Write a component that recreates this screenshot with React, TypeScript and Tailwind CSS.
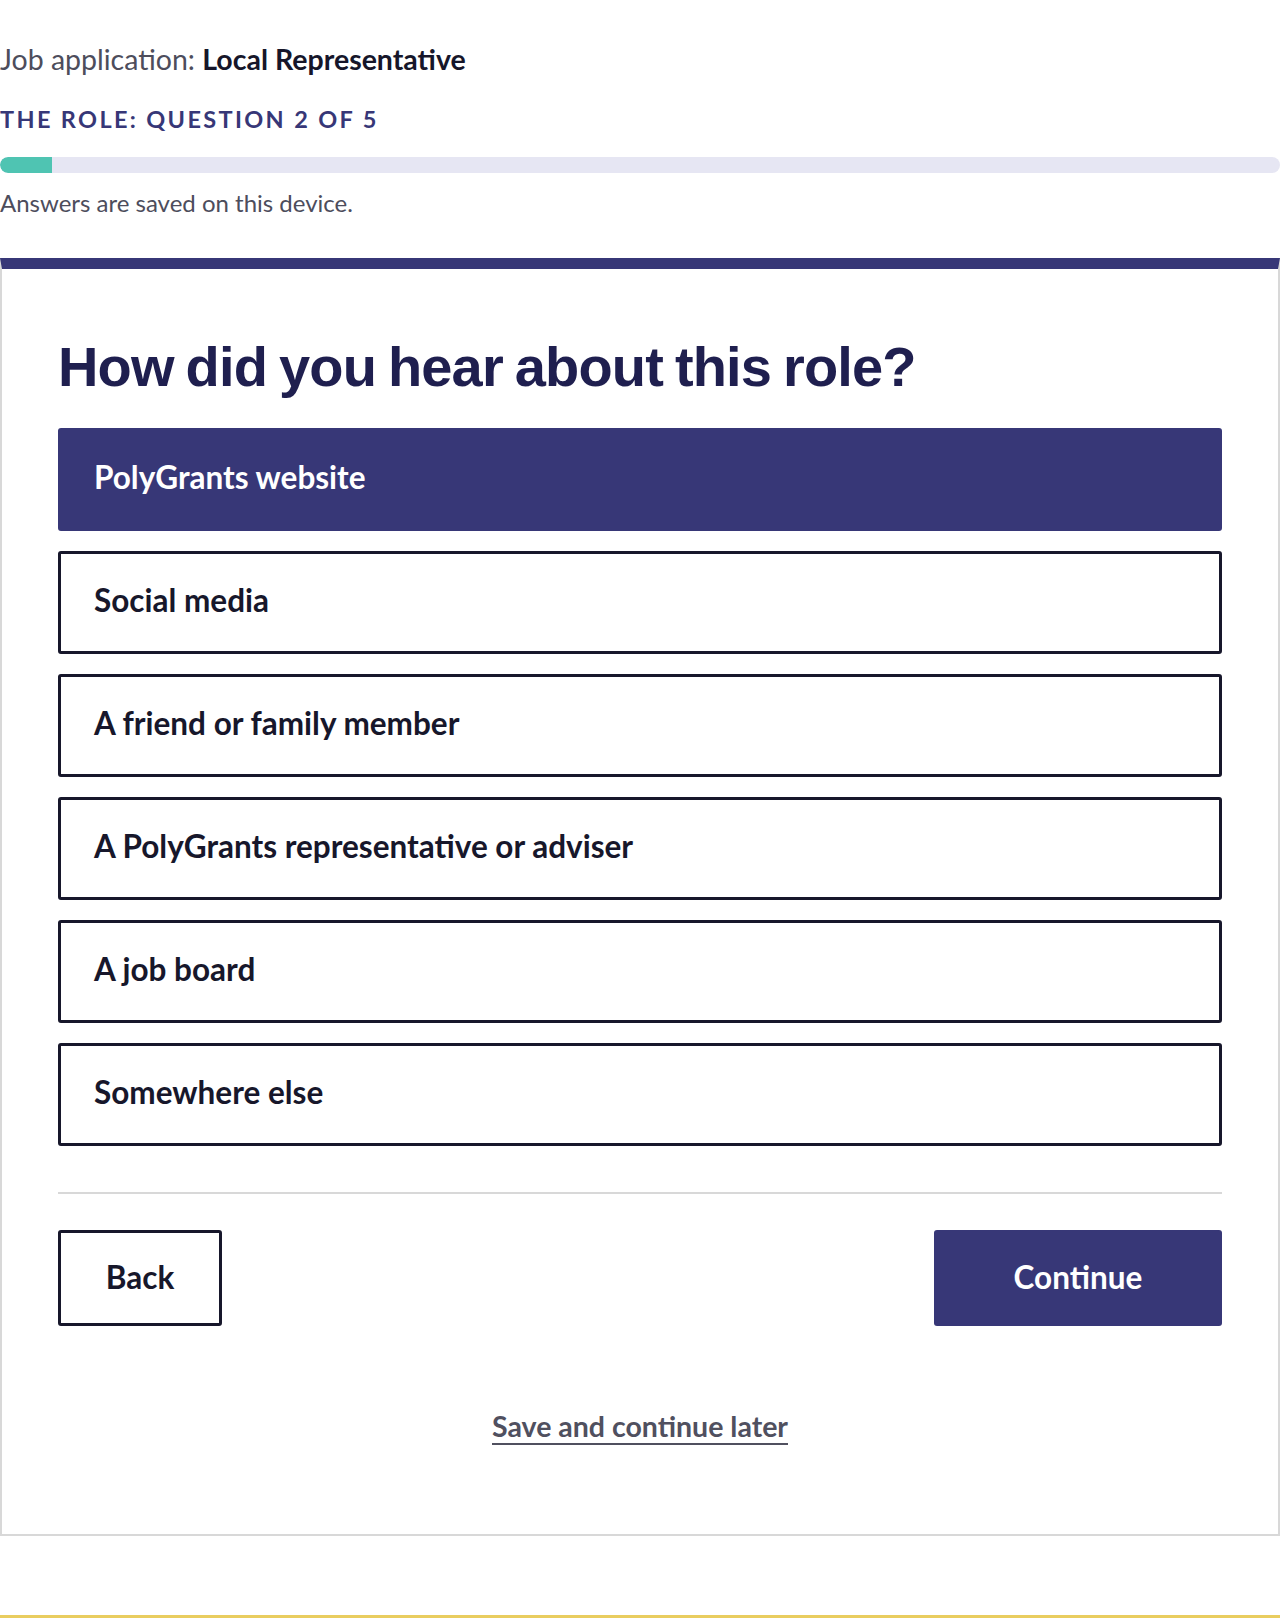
const OPTIONS = [
  "PolyGrants website",
  "Social media",
  "A friend or family member",
  "A PolyGrants representative or adviser",
  "A job board",
  "Somewhere else",
];

function OptionButton({ label, selected }: { label: string; selected: boolean }) {
  return (
    <button
      type="button"
      className={`flex h-[103px] w-full items-center rounded-[3px] border-[3px] pb-[4px] pl-[33px] text-left text-[31.5px] font-bold ${
        selected
          ? "border-[#373777] bg-[#373777] text-white"
          : "border-[#17172b] bg-white text-[#17172b]"
      }`}
    >
      {label}
    </button>
  );
}

export default function App() {
  const selected = 0;

  return (
    <div className="relative min-h-[1618px] bg-white font-['Lato',sans-serif]">
      <div className="pt-[43px]">
        <p className="text-[28.5px] leading-[32px] text-[#4d4d5c]">
          Job application: <span className="font-bold text-[#16162a]">Local Representative</span>
        </p>
        <p className="mt-[30px] text-[23.5px] font-bold leading-[28px] tracking-[0.1em] text-[#373777]">
          THE ROLE: QUESTION 2 OF 5
        </p>
        <div className="mt-[24px] h-[16px] w-full overflow-hidden rounded-full bg-[#e6e6f3]">
          <div className="h-full w-[52px] rounded-l-full bg-[#4fc4b2]" />
        </div>
        <p className="mt-[16px] text-[24px] leading-[28px] text-[#4d4d5c]">
          Answers are saved on this device.
        </p>
      </div>

      <div className="mt-[41px] border-x-2 border-b-2 border-t-[11px] border-[#d8d8d8] border-t-[#373777] px-[56px] pb-[86px]">
        <h1 className="mt-[66px] font-['Liberation_Sans',Arial,sans-serif] text-[56px] font-bold leading-[64px] tracking-[-0.015em] text-[#1f1f4f] [word-spacing:-0.05em]">
          How did you hear about this role?
        </h1>

        <div className="mt-[29px] flex flex-col gap-[20px]">
          {OPTIONS.map((option, index) => (
            <OptionButton key={option} label={option} selected={index === selected} />
          ))}
        </div>

        <div className="mt-[46px] h-[2px] bg-[#d8d8d8]" />

        <div className="mt-[36px] flex items-center justify-between">
          <button
            type="button"
            className="h-[96px] w-[164px] rounded-[3px] border-[3px] border-[#17172b] text-[31.5px] font-bold text-[#17172b]"
          >
            Back
          </button>
          <button
            type="button"
            className="h-[96px] w-[288px] rounded-[3px] bg-[#373777] text-[31.5px] font-bold text-white"
          >
            Continue
          </button>
        </div>

        <div className="mt-[79px] text-center">
          <a
            href="#"
            className="text-[28.5px] font-bold text-[#50505f] underline decoration-2 underline-offset-[6px]"
          >
            Save and continue later
          </a>
        </div>
      </div>

      <div className="absolute bottom-0 left-0 h-[3px] w-full bg-[#e9cd5f]" />
    </div>
  );
}
